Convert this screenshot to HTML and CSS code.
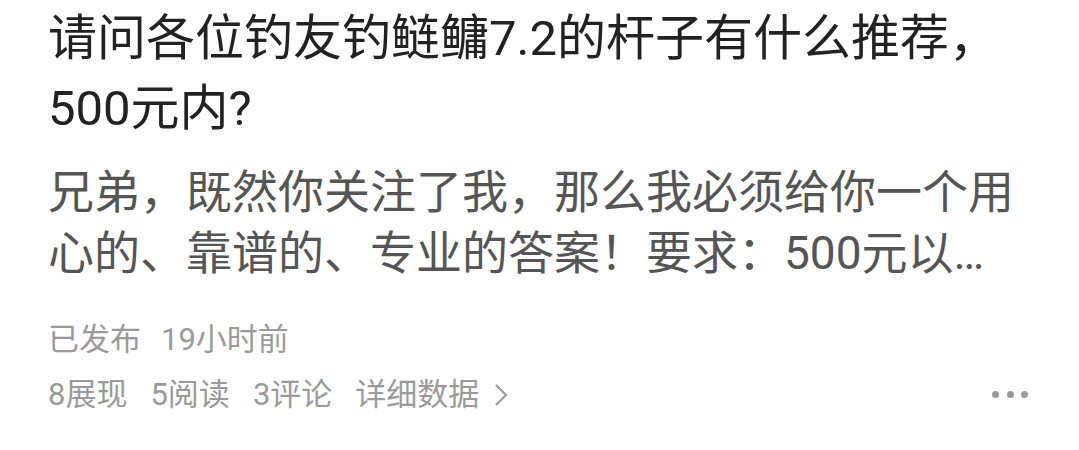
FILE: index.html
```html
<!DOCTYPE html>
<html lang="zh-CN">
<head>
<meta charset="utf-8">
<link rel="stylesheet" href="styles.css">
</head>
<body>
<div class="card">
  <h1 class="title">请问各位钓友钓鲢鳙7.2的杆子有什么推荐，500元内?</h1>
  <p class="excerpt">兄弟，既然你关注了我，那么我必须给你一个用心的、靠谱的、专业的答案！要求：500元以…</p>
  <div class="meta">
    <span class="meta-item">已发布</span><span class="meta-item">19小时前</span>
  </div>
  <div class="stats">
    <div class="stats-left">
      <span class="meta-item">8展现</span>
      <span class="meta-item">5阅读</span>
      <span class="meta-item">3评论</span>
      <span class="meta-item detail">详细数据<svg class="chev" width="14" height="24" viewBox="0 0 14 24"><path d="M2 2 L12 12 L2 22" fill="none" stroke="#9a9a9a" stroke-width="2.2"/></svg></span>
    </div>
    <div class="more"><span class="dot"></span><span class="dot"></span><span class="dot"></span></div>
  </div>
</div>
</body>
</html>
```

FILE: styles.css
```css
html, body {
  margin: 0;
  padding: 0;
  background: #ffffff;
}
body {
  font-family: Roboto, "Noto Sans CJK SC", sans-serif;
}
.card {
  padding: 4px 48px 0 48px;
}
.title {
  margin: 0;
  font-size: 49px;
  line-height: 70px;
  font-weight: 400;
  color: #222222;
  width: 960px;
}
.excerpt {
  margin: 18px 0 0 0;
  font-size: 46px;
  line-height: 61px;
  color: #555555;
}
.meta {
  margin-top: 28px;
  font-size: 31px;
  line-height: 55px;
  color: #9a9a9a;
  display: flex;
  gap: 20px;
}
.stats {
  display: flex;
  align-items: center;
  justify-content: space-between;
  font-size: 31px;
  line-height: 55px;
  color: #9a9a9a;
}
.stats-left {
  display: flex;
  gap: 23px;
}
.detail {
  display: inline-flex;
  align-items: center;
  gap: 15px;
}
.more {
  display: flex;
  gap: 7.5px;
  margin-right: 3px;
}
.dot {
  width: 7px;
  height: 7px;
  border-radius: 50%;
  background: #9a9a9a;
}
```
